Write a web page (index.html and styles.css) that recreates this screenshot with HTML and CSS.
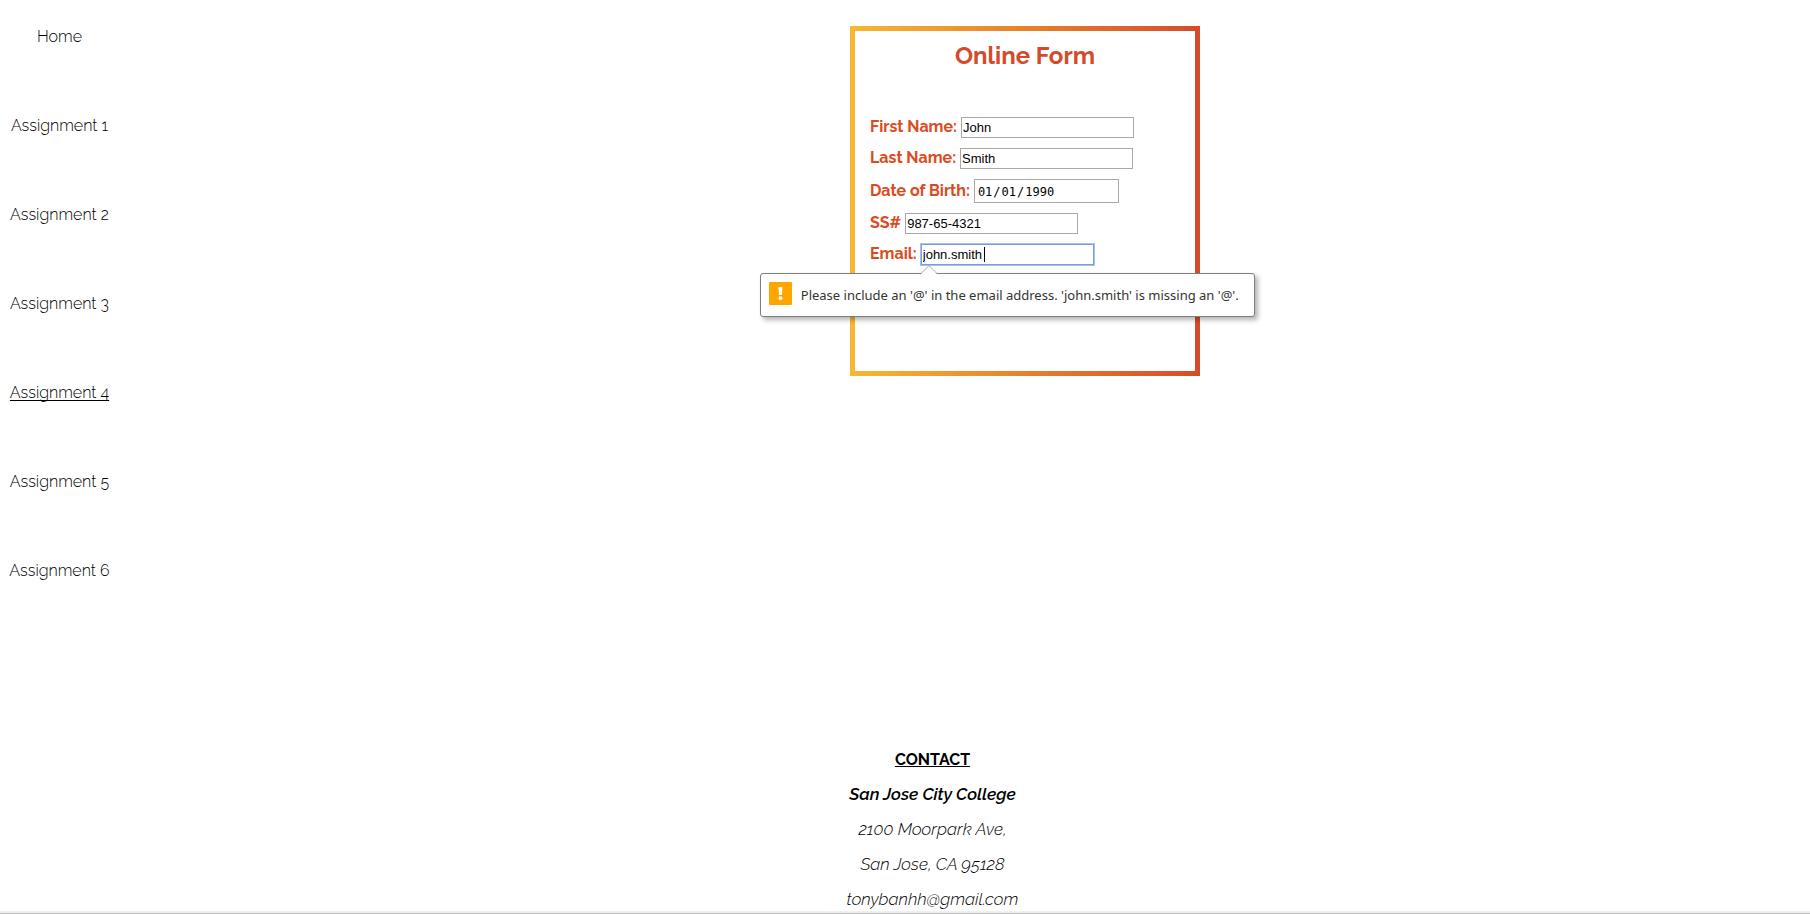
FILE: index.html
```html
<!DOCTYPE html>
<html lang="en">
<head>
<meta charset="utf-8">
<title>Online Form</title>
<link rel="stylesheet" href="styles.css">
</head>
<body>
<div class="page">
  <nav class="nav">
    <a href="#">Home</a>
    <a href="#">Assignment 1</a>
    <a href="#">Assignment 2</a>
    <a href="#">Assignment 3</a>
    <a href="#" class="current">Assignment 4</a>
    <a href="#">Assignment 5</a>
    <a href="#">Assignment 6</a>
  </nav>
  <main class="main">
    <form class="form" novalidate>
      <h1 class="title">Online Form</h1>
      <div class="row"><label for="first">First Name:</label><input id="first" type="text" value="John"></div>
      <div class="row"><label for="last">Last Name:</label><input id="last" type="text" value="Smith"></div>
      <div class="row"><label for="dob">Date of Birth:</label><input id="dob" class="date" type="date" value="1990-01-01"></div>
      <div class="row"><label for="ssn">SS#</label><input id="ssn" type="text" value="987-65-4321"></div>
      <div class="row"><label for="email">Email:</label><span class="field"><input id="email" class="active" type="email" value="john.smith"><span class="caret"></span>
        <span class="bubble" role="alert">
          <svg class="arrow" width="18" height="10" viewBox="0 0 18 10"><path d="M0 10L9 1l9 9z" fill="#fff"/><path d="M.5 9L9 .7 17.500 9" fill="none" stroke="#aaa"/></svg>
          <svg class="warn" width="23" height="23" viewBox="0 0 23 23"><rect width="23" height="23" rx="1" fill="#ffa500"/><path d="M9.500 5h4l-.5 8h-3z" fill="#fff"/><circle cx="11.500" cy="16.200" r="1.900" fill="#fff"/></svg>
          <span>Please include an '@' in the email address. 'john.smith' is missing an '@'.</span>
        </span></span></div>
    </form>
  </main>
</div>
<footer class="footer">
  <h2>CONTACT</h2>
  <address>
    <strong>San Jose City College</strong>
    <span>2100 Moorpark Ave,</span>
    <span>San Jose, CA 95128</span>
    <span>tonybanhh@gmail.com</span>
  </address>
</footer>
</body>
</html>
```

FILE: styles.css
```css
* { box-sizing: border-box; }
body {
  margin: 0;
  min-height: 100vh;
  display: flex;
  flex-direction: column;
  justify-content: space-between;
  background: #fff;
  border-bottom: 1px solid #bbb;
  color: #000;
  font: 300 16px/20px Raleway, Lato, sans-serif;
}
.page {
  display: grid;
  grid-template-columns: 85fr 96fr;
  padding-top: 26px;
}
.nav {
  display: flex;
  flex-direction: column;
  align-items: center;
  gap: 69px;
  width: 119px;
  padding-top: 1px;
}
.nav a { color: #000; text-decoration: none; white-space: nowrap; }
.nav .current {
  text-decoration: underline;
  text-decoration-skip-ink: none;
  text-underline-offset: 2px;
}
.form {
  display: flex;
  flex-direction: column;
  gap: 10px;
  width: 350px;
  padding: 15px 15px 106px;
  border: 5px solid;
  border-image: linear-gradient(to right, #f7b733, #d54b29) 5;
  color: #dd4a20;
}
.title {
  margin: 0 0 41px;
  font-size: 24px;
  line-height: 20px;
  font-weight: 700;
  text-align: center;
  color: #d54b29;
}
.row { display: flex; align-items: center; gap: 4px; font-weight: 700; }
.row label { line-height: 19px; padding-bottom: 2px; }
.row input {
  display: block;
  width: 173px;
  height: 21px;
  padding: 1px;
  border: 1px solid #a9a9a9;
  background: #fff;
  color: #000;
  font: 13px "Liberation Sans", Arial, sans-serif;
  outline: none;
}
.row .date {
  width: 145px;
  height: 24px;
  padding: 3px 2px 1px;
  font: 12px "DejaVu Sans Mono", monospace;
}
.date::-webkit-calendar-picker-indicator { display: none; }
.field { position: relative; }
.row .active { border-color: #7a9de0; box-shadow: 0 0 0 1px #a3c1f3; }
.caret {
  position: absolute;
  top: 3px;
  left: 63px;
  width: 1px;
  height: 15px;
  background: #000;
}
.bubble {
  position: absolute;
  top: 29px;
  left: -161px;
  display: flex;
  align-items: flex-start;
  gap: 9px;
  min-width: 495px;
  padding: 8px 8px 11px;
  border: 1px solid #7f7f7f;
  border-radius: 3px;
  background: #fff;
  box-shadow: 3px 3px 5px rgba(0, 0, 0, .3);
  color: #333;
  font: 400 13px/26px "Noto Sans", sans-serif;
  white-space: nowrap;
}
.bubble > span { margin-bottom: -4px; }
.arrow { position: absolute; top: -9px; left: 159px; }
.footer { padding: 0 0 2px 55px; border-bottom: 2px solid #f0f0f0; text-align: center; }
.footer h2 { margin: 0 0 14px; font-size: 16px; line-height: 20px; font-weight: 700; text-decoration: underline; }
.footer address { display: flex; flex-direction: column; gap: 15px; font-size: 17px; }
.footer strong { font-weight: 600; }
```
